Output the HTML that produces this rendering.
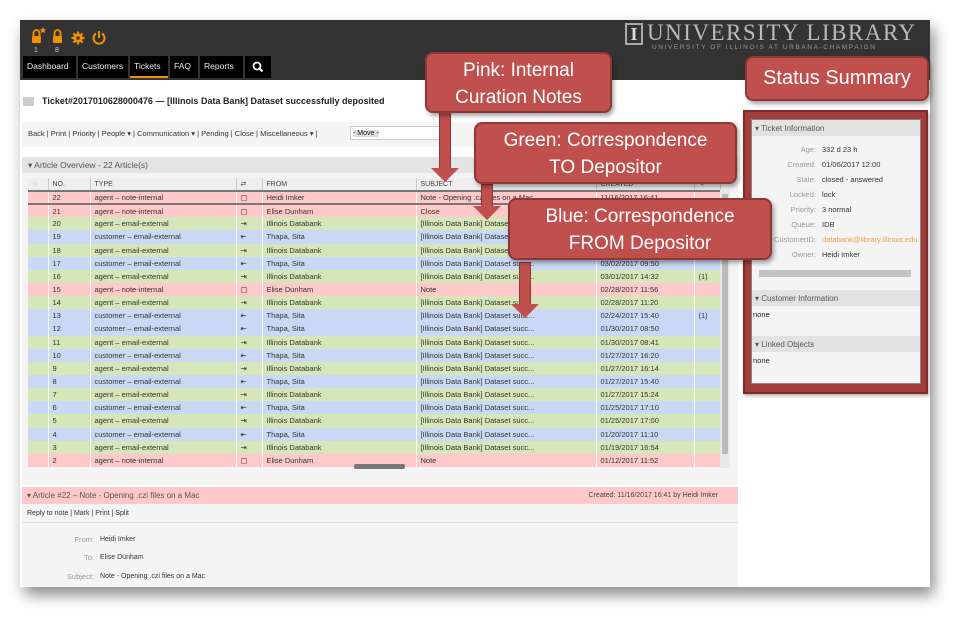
<!DOCTYPE html>
<html><head><meta charset="utf-8"><style>
*{margin:0;padding:0;box-sizing:border-box}
body{width:971px;height:628px;background:#fff;position:relative;overflow:hidden;font-family:"Liberation Sans",Arial,sans-serif;font-size:8px;color:#222}
.a{position:absolute}
#shot{left:20px;top:20px;width:910px;height:567px;background:#fff;box-shadow:4px 8px 14px rgba(0,0,0,.45);overflow:hidden}
#hdr{left:0;top:0;width:910px;height:60px;background:#333}
.tab{position:absolute;top:36px;height:22px;background:#000;color:#eee;font-size:8.5px;line-height:20px;padding-left:4px}
.tb{font-size:7.5px;color:#333}
table{border-collapse:collapse;table-layout:fixed}
td{height:13.15px;font-size:7.5px;padding-left:4px;white-space:nowrap;overflow:hidden;border-right:1px solid rgba(255,255,255,.6);color:#333}
.p td{background:#ffc9c9}.g td{background:#d5e6b8}.b td{background:#c9d9f5}
.sel td{border-top:2px solid #777;border-bottom:2px solid #777}
th{height:13px;font-size:7px;font-weight:normal;text-align:left;padding-left:4px;background:#eee;color:#444;border-right:1px solid #ccc}
.co{position:absolute;background:#c0504d;border:2px solid #8c3836;border-radius:8px;color:#fff;font-size:19px;text-align:center;line-height:27px;box-shadow:2px 3px 4px rgba(0,0,0,.35)}
.arr{position:absolute;width:12px;background:#c0504d;border:1px solid #8c3836;border-bottom:none}
.arr:after{content:"";position:absolute;left:-9px;bottom:-14px;border-left:14px solid transparent;border-right:14px solid transparent;border-top:14px solid #c0504d}
.k{position:absolute;left:0;width:64px;text-align:right;color:#999;font-size:7.5px}
.v{position:absolute;left:70px;font-size:7.5px;color:#333;white-space:nowrap}
</style></head><body>
<div id="shot" class="a">
 <div id="hdr" class="a">
  <svg class="a" style="left:8px;top:4px" width="90" height="30" viewBox="0 0 90 30">
   <g fill="#f39200">
    <rect x="4" y="12" width="9" height="7" rx="1"/><path d="M5.5 12v-3a3 3 0 0 1 6 0v3" fill="none" stroke="#f39200" stroke-width="1.8"/>
    <path d="M15 3l1 2.2 2.3.2-1.8 1.5.6 2.3-2.1-1.3-2.1 1.3.6-2.3-1.8-1.5 2.3-.2z"/>
    <rect x="25" y="12" width="9" height="7" rx="1"/><path d="M26.5 12v-3a3 3 0 0 1 6 0v3" fill="none" stroke="#f39200" stroke-width="1.8"/>
    <circle cx="50" cy="14" r="4.5"/><g stroke="#f39200" stroke-width="2.2"><path d="M50 7.5v13M43.5 14h13M45.4 9.4l9.2 9.2M54.6 9.4l-9.2 9.2"/></g><circle cx="50" cy="14" r="1.7" fill="#333"/>
    <path d="M68 9.5a5.5 5.5 0 1 0 6 0" fill="none" stroke="#f39200" stroke-width="2"/><path d="M71 7v7" stroke="#f39200" stroke-width="2"/>
   </g>
   <text x="6" y="28" fill="#ccc" font-size="7" font-family="Liberation Sans">1</text>
   <text x="27" y="28" fill="#ccc" font-size="7" font-family="Liberation Sans">8</text>
  </svg>
  <div class="tab" style="left:3px;width:53px">Dashboard</div>
  <div class="tab" style="left:58px;width:50px">Customers</div>
  <div class="tab" style="left:110px;width:38px;border-bottom:2px solid #f39200">Tickets</div>
  <div class="tab" style="left:150px;width:28px">FAQ</div>
  <div class="tab" style="left:180px;width:43px">Reports</div>
  <svg class="a" style="left:225px;top:36px" width="26" height="22"><rect width="26" height="22" fill="#000"/><circle cx="12" cy="10" r="3.5" fill="none" stroke="#fff" stroke-width="1.8"/><path d="M14.5 12.5l3 3" stroke="#fff" stroke-width="2"/></svg>
  <div class="a" style="left:605px;top:3px;width:18px;height:22px;border:2px solid #aaa;color:#ddd;font-family:'Liberation Serif',serif;font-size:18px;line-height:18px;text-align:center;font-weight:bold">I</div>
  <div class="a" style="left:627px;top:0px;color:#bbb;font-family:'Liberation Serif',serif;font-size:23px;letter-spacing:1.5px;white-space:nowrap">UNIVERSITY LIBRARY</div>
  <div class="a" style="left:632px;top:24px;color:#999;font-size:6.5px;letter-spacing:1.6px;white-space:nowrap">UNIVERSITY OF ILLINOIS AT URBANA-CHAMPAIGN</div>
 </div>
 <div class="a" style="left:3px;top:77px;width:11px;height:9px;background:#ccc"></div>
 <div class="a" style="left:22px;top:76px;font-size:9px;font-weight:bold;white-space:nowrap">Ticket#2017010628000476 — [Illinois Data Bank] Dataset successfully deposited</div>
 <div class="a" style="left:2px;top:102px;width:716px;height:25px;background:#f4f4f4"></div>
 <div class="a tb" style="left:8px;top:109px;white-space:nowrap">Back&nbsp;|&nbsp;Print&nbsp;|&nbsp;Priority&nbsp;|&nbsp;People ▾&nbsp;|&nbsp;Communication ▾&nbsp;|&nbsp;Pending&nbsp;|&nbsp;Close&nbsp;|&nbsp;Miscellaneous ▾&nbsp;|</div>
 <div class="a" style="left:330px;top:106px;width:100px;height:14px;background:#fff;border:1px solid #ccc;font-size:7px;padding:3px 2px"><span style="background:#ddd">- Move -</span></div>
 <div class="a" style="left:2px;top:137px;width:716px;height:16px;background:#e4e4e4;font-size:8.5px;color:#555;padding:3px 6px">▾ Article Overview - 22 Article(s)</div>
 <div class="a" style="left:2px;top:153px;width:716px;height:312px;background:#f4f4f4"></div>
 <table class="a" style="left:8px;top:158px;width:692px">
  <colgroup><col style="width:20px"><col style="width:42px"><col style="width:146px"><col style="width:26px"><col style="width:154px"><col style="width:180px"><col style="width:98px"><col style="width:26px"></colgroup>
  <tr><th style="color:#bbb">☆</th><th>NO.</th><th>TYPE</th><th>⇄</th><th>FROM</th><th>SUBJECT</th><th>CREATED</th><th>✎</th></tr>
  <tr class="p sel"><td></td><td>22</td><td>agent – note-internal</td><td>▢</td><td>Heidi Imker</td><td>Note - Opening .czi files on a Mac</td><td>11/16/2017 16:41</td><td></td></tr>
  <tr class="p"><td></td><td>21</td><td>agent – note-internal</td><td>▢</td><td>Elise Dunham</td><td>Close</td><td>11/09/2017 10:21</td><td></td></tr>
  <tr class="g"><td></td><td>20</td><td>agent – email-external</td><td>⇥</td><td>Illinois Databank</td><td>[Illinois Data Bank] Dataset succ...</td><td>03/03/2017 10:12</td><td></td></tr>
  <tr class="b"><td></td><td>19</td><td>customer – email-external</td><td>⇤</td><td>Thapa, Sita</td><td>[Illinois Data Bank] Dataset succ...</td><td>03/03/2017 09:40</td><td></td></tr>
  <tr class="g"><td></td><td>18</td><td>agent – email-external</td><td>⇥</td><td>Illinois Databank</td><td>[Illinois Data Bank] Dataset succ...</td><td>03/02/2017 11:02</td><td></td></tr>
  <tr class="b"><td></td><td>17</td><td>customer – email-external</td><td>⇤</td><td>Thapa, Sita</td><td>[Illinois Data Bank] Dataset succ...</td><td>03/02/2017 09:50</td><td></td></tr>
  <tr class="g"><td></td><td>16</td><td>agent – email-external</td><td>⇥</td><td>Illinois Databank</td><td>[Illinois Data Bank] Dataset succ...</td><td>03/01/2017 14:32</td><td>(1)</td></tr>
  <tr class="p"><td></td><td>15</td><td>agent – note-internal</td><td>▢</td><td>Elise Dunham</td><td>Note</td><td>02/28/2017 11:56</td><td></td></tr>
  <tr class="g"><td></td><td>14</td><td>agent – email-external</td><td>⇥</td><td>Illinois Databank</td><td>[Illinois Data Bank] Dataset succ...</td><td>02/28/2017 11:20</td><td></td></tr>
  <tr class="b"><td></td><td>13</td><td>customer – email-external</td><td>⇤</td><td>Thapa, Sita</td><td>[Illinois Data Bank] Dataset succ...</td><td>02/24/2017 15:40</td><td>(1)</td></tr>
  <tr class="b"><td></td><td>12</td><td>customer – email-external</td><td>⇤</td><td>Thapa, Sita</td><td>[Illinois Data Bank] Dataset succ...</td><td>01/30/2017 08:50</td><td></td></tr>
  <tr class="g"><td></td><td>11</td><td>agent – email-external</td><td>⇥</td><td>Illinois Databank</td><td>[Illinois Data Bank] Dataset succ...</td><td>01/30/2017 08:41</td><td></td></tr>
  <tr class="b"><td></td><td>10</td><td>customer – email-external</td><td>⇤</td><td>Thapa, Sita</td><td>[Illinois Data Bank] Dataset succ...</td><td>01/27/2017 16:20</td><td></td></tr>
  <tr class="g"><td></td><td>9</td><td>agent – email-external</td><td>⇥</td><td>Illinois Databank</td><td>[Illinois Data Bank] Dataset succ...</td><td>01/27/2017 16:14</td><td></td></tr>
  <tr class="b"><td></td><td>8</td><td>customer – email-external</td><td>⇤</td><td>Thapa, Sita</td><td>[Illinois Data Bank] Dataset succ...</td><td>01/27/2017 15:40</td><td></td></tr>
  <tr class="g"><td></td><td>7</td><td>agent – email-external</td><td>⇥</td><td>Illinois Databank</td><td>[Illinois Data Bank] Dataset succ...</td><td>01/27/2017 15:24</td><td></td></tr>
  <tr class="b"><td></td><td>6</td><td>customer – email-external</td><td>⇤</td><td>Thapa, Sita</td><td>[Illinois Data Bank] Dataset succ...</td><td>01/25/2017 17:10</td><td></td></tr>
  <tr class="g"><td></td><td>5</td><td>agent – email-external</td><td>⇥</td><td>Illinois Databank</td><td>[Illinois Data Bank] Dataset succ...</td><td>01/25/2017 17:00</td><td></td></tr>
  <tr class="b"><td></td><td>4</td><td>customer – email-external</td><td>⇤</td><td>Thapa, Sita</td><td>[Illinois Data Bank] Dataset succ...</td><td>01/20/2017 11:10</td><td></td></tr>
  <tr class="g"><td></td><td>3</td><td>agent – email-external</td><td>⇥</td><td>Illinois Databank</td><td>[Illinois Data Bank] Dataset succ...</td><td>01/19/2017 16:54</td><td></td></tr>
  <tr class="p"><td></td><td>2</td><td>agent – note-internal</td><td>▢</td><td>Elise Dunham</td><td>Note</td><td>01/12/2017 11:52</td><td></td></tr>
 </table>
 <div class="a" style="left:700px;top:170px;width:10px;height:278px;background:#e8e8e8"><div style="margin:4px 2px;height:260px;background:#bbb"></div></div>
 <div class="a" style="left:334px;top:444px;width:51px;height:5px;background:#777;border-radius:2px"></div>
 <div class="a" style="left:2px;top:467px;width:716px;height:17px;background:#ffc9c9;font-size:8px;color:#555;padding:4px 5px">▾ Article #22 – Note - Opening .czi files on a Mac<span style="position:absolute;right:20px;top:5px;font-size:7px;color:#444">Created: 11/16/2017 16:41 by Heidi Imker</span></div>
 <div class="a" style="left:2px;top:484px;width:716px;height:83px;background:#f4f4f4"></div>
 <div class="a tb" style="left:7px;top:490px;font-size:7px">Reply to note&nbsp;|&nbsp;Mark&nbsp;|&nbsp;Print&nbsp;|&nbsp;Split</div>
 <div class="a" style="left:2px;top:502px;width:716px;height:1px;background:#ddd"></div>
 <div class="a" style="left:10px;top:515px;width:300px;height:60px">
  <div class="k" style="top:0">From:</div><div class="v" style="top:1px;font-size:7px">Heidi Imker</div>
  <div class="k" style="top:18px">To:</div><div class="v" style="top:19px;font-size:7px">Elise Dunham</div>
  <div class="k" style="top:37px">Subject:</div><div class="v" style="top:38px;font-size:7px">Note - Opening .czi files on a Mac</div>
 </div>
</div>
<div class="a" style="left:743px;top:110px;width:185px;height:284px;background:#a33d3a;border:2px solid #7a2c2a;box-shadow:1px 2px 3px rgba(0,0,0,.3)"></div>
<div class="a" style="left:751px;top:119px;width:170px;height:265px;background:#f4f4f4;border:1px solid #888;overflow:hidden">
 <div style="background:#e2e2e2;height:16px;font-size:8px;color:#555;padding:4px 3px">▾ Ticket Information</div>
 <div class="a" style="left:0;top:24px;width:170px;height:150px">
  <div class="k" style="top:1px">Age:</div><div class="v" style="top:1px">332 d 23 h</div>
  <div class="k" style="top:16px">Created:</div><div class="v" style="top:16px">01/06/2017 12:00</div>
  <div class="k" style="top:31px">State:</div><div class="v" style="top:31px">closed - answered</div>
  <div class="k" style="top:46px">Locked:</div><div class="v" style="top:46px">lock</div>
  <div class="k" style="top:61px">Priority:</div><div class="v" style="top:61px">3 normal</div>
  <div class="k" style="top:76px">Queue:</div><div class="v" style="top:76px">IDB</div>
  <div class="k" style="top:91px">CustomerID:</div><div class="v" style="top:91px;color:#e8a050">databank@library.illinois.edu</div>
  <div class="k" style="top:106px">Owner:</div><div class="v" style="top:106px">Heidi Imker</div>
 </div>
 <div class="a" style="left:7px;top:150px;width:152px;height:7px;background:#c4c4c4"></div>
 <div class="a" style="left:0;top:170px;width:170px;height:16px;background:#e2e2e2;font-size:8px;color:#555;padding:4px 3px">▾ Customer Information</div>
 <div class="a" style="left:1px;top:190px;font-size:7.5px">none</div>
 <div class="a" style="left:0;top:216px;width:170px;height:16px;background:#e2e2e2;font-size:8px;color:#555;padding:4px 3px">▾ Linked Objects</div>
 <div class="a" style="left:1px;top:236px;font-size:7.5px">none</div>
</div>
<div class="arr" style="left:439px;top:112px;height:56px"></div>
<div class="arr" style="left:481px;top:184px;height:22px"></div>
<div class="arr" style="left:519px;top:262px;height:42px"></div>
<div class="co" style="left:425px;top:52px;width:187px;height:61px;padding-top:3px">Pink: Internal<br>Curation Notes</div>
<div class="co" style="left:745px;top:56px;width:184px;height:45px;line-height:41px;font-size:20px">Status Summary</div>
<div class="co" style="left:474px;top:122px;width:263px;height:62px;padding-top:3px">Green: Correspondence<br>TO Depositor</div>
<div class="co" style="left:508px;top:198px;width:264px;height:62px;padding-top:3px">Blue: Correspondence<br>FROM Depositor</div>
</body></html>
